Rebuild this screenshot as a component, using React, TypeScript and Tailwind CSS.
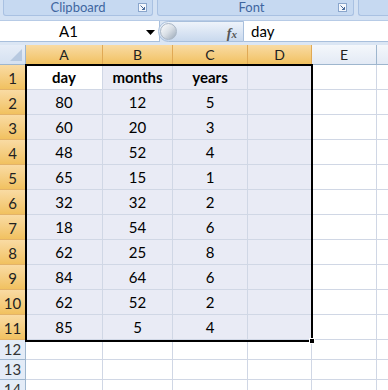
import React from "react";

const cols = ["A", "B", "C", "D", "E"];
const data: string[][] = [
  ["day", "months", "years", ""],
  ["80", "12", "5", ""],
  ["60", "20", "3", ""],
  ["48", "52", "4", ""],
  ["65", "15", "1", ""],
  ["32", "32", "2", ""],
  ["18", "54", "6", ""],
  ["62", "25", "8", ""],
  ["84", "64", "6", ""],
  ["62", "52", "2", ""],
  ["85", "5", "4", ""],
];

const font = { fontFamily: "Lato, 'Open Sans', 'Liberation Sans', sans-serif" };

function LaunchIcon() {
  return (
    <svg width="9" height="9" viewBox="0 0 9 9" className="block">
      <rect x="0.5" y="0.5" width="8" height="8" fill="#f4f7fc" stroke="#8aa6cc" />
      <path d="M2.5 2.5 L6.5 6.5 M6.5 4 V6.5 H4" stroke="#4a6a99" strokeWidth="1" fill="none" />
    </svg>
  );
}

export default function App() {
  return (
    <div className="w-[388px] h-[390px] overflow-hidden bg-white relative" style={font}>
      {/* Ribbon group strip */}
      <div className="h-[20px] bg-[#d3e1f3] flex items-start">
        <div className="ml-[3px] w-[150px] h-[16px] bg-[#c6d9f1] border-x border-b border-[#a9c1e2] rounded-b-[3px] flex items-center relative">
          <span className="w-full text-center text-[13px] leading-none text-[#3f66a0]">Clipboard</span>
          <div className="absolute right-[5px] top-[3px]"><LaunchIcon /></div>
        </div>
        <div className="ml-[4px] w-[197px] h-[16px] bg-[#c6d9f1] border-x border-b border-[#a9c1e2] rounded-b-[3px] flex items-center relative">
          <span className="w-full text-center text-[13px] leading-none text-[#3f66a0] pr-[8px]">Font</span>
          <div className="absolute right-[6px] top-[3px]"><LaunchIcon /></div>
        </div>
        <div className="ml-[4px] flex-1 h-[16px] bg-[#c6d9f1] border-l border-b border-[#a9c1e2] rounded-bl-[3px]" />
      </div>
      {/* Formula bar */}
      <div className="h-[25px] bg-[#dbe6f4] flex items-start border-t border-[#b7cbe6]">
        <div className="w-[160px] h-[21px] bg-white border-r border-b border-[#a8bfdc] flex items-center relative">
          <span className="w-full text-center text-[15px] text-black pr-[22px]">A1</span>
          <svg width="9" height="5" viewBox="0 0 9 5" className="absolute left-[146px] top-[9px]">
            <path d="M0 0 H9 L4.5 5 Z" fill="#000" />
          </svg>
        </div>
        <div className="w-[86px] h-[21px] flex items-center relative bg-gradient-to-b from-[#eef3fa] to-[#c9d9ee] rounded-l-[11px] border border-[#a8bfdc] -ml-[2px]">
          <div className="absolute left-[1px] top-[1px] w-[17px] h-[17px] rounded-full bg-gradient-to-br from-[#ffffff] via-[#d9dfe6] to-[#9aa8b8] border border-[#aab7c6]" />
          <span className="absolute right-[6px] top-[1px] text-[14px] italic text-[#555] font-bold" style={{ fontFamily: "'Liberation Serif', serif" }}>
            f<span className="text-[11px]">x</span>
          </span>
        </div>
        <div className="flex-1 h-[21px] bg-white border-b border-[#a8bfdc] flex items-center pl-[7px]">
          <span className="text-[15px] text-black">day</span>
        </div>
      </div>
      {/* Grid */}
      <div className="relative">
        <div className="grid grid-cols-[26px_77px_70px_75px_64px_65px_1fr] grid-rows-[20px_repeat(11,25px)_20px_20px_20px]">
          {/* corner */}
          <div className="bg-gradient-to-b from-[#e6edf7] to-[#d5e1f1] border-r border-b border-[#9eb6ce] relative">
            <svg width="12" height="12" viewBox="0 0 12 12" className="absolute right-[3px] bottom-[3px]">
              <path d="M12 0 V12 H0 Z" fill="#b7c9e0" />
            </svg>
          </div>
          {cols.map((c, i) =>
            i < 4 ? (
              <div key={c} className="bg-gradient-to-b from-[#f9dba3] to-[#f1c15f] border-r border-b border-[#e0a955] flex items-center justify-center text-[14px] text-[#222]">
                {c}
              </div>
            ) : (
              <div key={c} className="bg-gradient-to-b from-[#f4f7fb] to-[#e3eaf5] border-r border-b border-[#9eb6ce] flex items-center justify-center text-[14px] text-[#222]">
                {c}
              </div>
            )
          )}
          <div className="bg-gradient-to-b from-[#f4f7fb] to-[#e3eaf5] border-b border-[#9eb6ce]" />
          {data.map((row, r) => (
            <React.Fragment key={r}>
              <div className="bg-gradient-to-b from-[#f9dba3] to-[#f1c15f] border-r border-b border-[#e3b268] flex items-center justify-center text-[15px] text-[#222] pt-[2px]">
                {r + 1}
              </div>
              {row.map((v, ci) => (
                <div
                  key={ci}
                  className={`${r === 0 && ci === 0 ? "bg-white" : "bg-[#e9ebf5]"} border-r border-b border-[#d0d7e5] flex items-center justify-center text-[15px] text-black ${r === 0 ? "font-bold" : ""}`}
                >
                  {v}
                </div>
              ))}
              <div className="bg-white border-r border-b border-[#d0d7e5]" />
              <div className="bg-white border-b border-[#d0d7e5]" />
            </React.Fragment>
          ))}
          {[12, 13, 14].map((n) => (
            <React.Fragment key={n}>
              <div className="bg-[#e4ecf7] border-r border-b border-[#9eb6ce] flex items-center justify-center text-[15px] text-[#333]">
                {n}
              </div>
              {[0, 1, 2, 3, 4].map((ci) => (
                <div key={ci} className="bg-white border-r border-b border-[#d0d7e5]" />
              ))}
              <div className="bg-white border-b border-[#d0d7e5]" />
            </React.Fragment>
          ))}
        </div>
        {/* selection overlay */}
        <div className="absolute left-[25px] top-[19px] w-[288px] h-[278px] border-[2px] border-black pointer-events-none" />
        <div className="absolute left-[309px] top-[293px] w-[6px] h-[6px] bg-black border border-white pointer-events-none" />
      </div>
    </div>
  );
}
